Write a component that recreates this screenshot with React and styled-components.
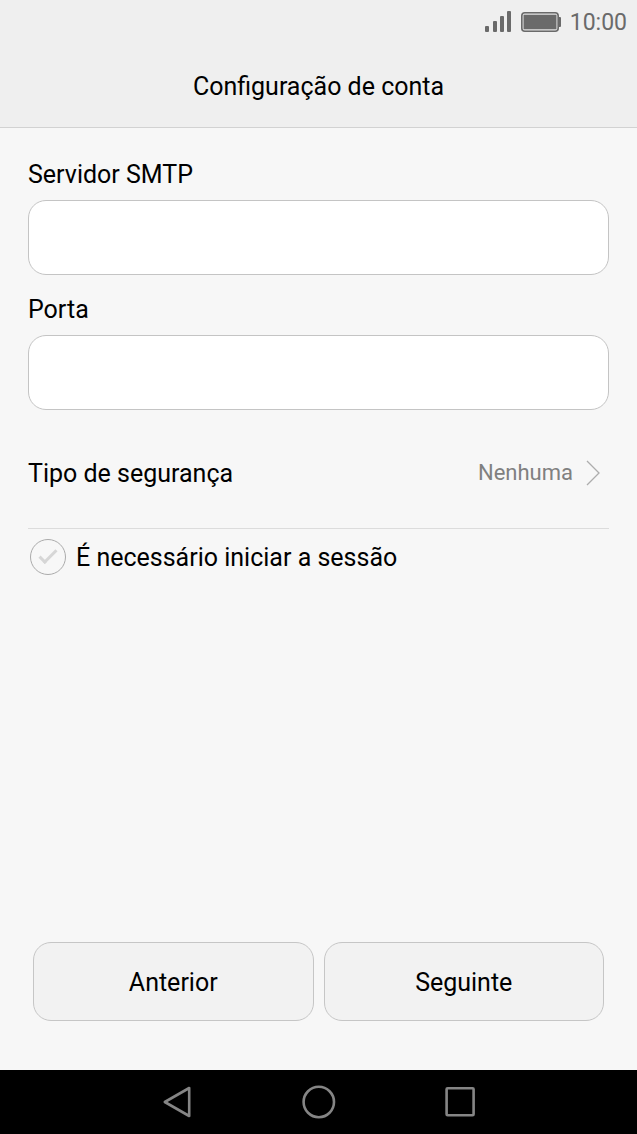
import { useState } from 'react';
import styled, { createGlobalStyle } from 'styled-components';

const GlobalStyle = createGlobalStyle`
    *, *::before, *::after {
        box-sizing: border-box;
    }

    body {
        margin: 0;
        background: #f7f7f7;
        color: #000;
        font-family: Roboto, 'Noto Sans', sans-serif;
        font-size: 25px;
        line-height: 34px;
    }

    button, input, select {
        font: inherit;
        color: inherit;
    }
`;

const Screen = styled.div`
    display: flex;
    flex-direction: column;
    min-height: 100vh;
`;

const Header = styled.header`
    background: #efefef;
    border-bottom: 1px solid #d2d2d2;
`;

const StatusBar = styled.div`
    display: flex;
    align-items: center;
    justify-content: flex-end;
    gap: 9px;
    height: 44px;
    padding-right: 10px;
    color: #6a6a6a;
    font-size: 23px;

    svg {
        display: block;
    }
`;

const Clock = styled.span`
    padding-top: 2px;
`;

const Title = styled.h1`
    margin: 0;
    padding: 26px 28px 23px;
    font-size: 25px;
    font-weight: 400;
    text-align: center;
`;

const Form = styled.form`
    flex: 1;
    display: flex;
    flex-direction: column;
    padding: 30px 28px 49px;
`;

const Field = styled.div`
    display: flex;
    flex-direction: column;
    gap: 8px;
    margin-bottom: 18px;
`;

const TextInput = styled.input`
    width: 100%;
    height: 75px;
    padding: 0 20px;
    background: #fff;
    border: 1px solid #c4c4c4;
    border-radius: 18px;
    outline: none;
`;

const SelectRow = styled.div`
    display: flex;
    align-items: center;
    justify-content: space-between;
    height: 101px;
    padding: 0 9px 10px 0;
    border-bottom: 1px solid #dcdcdc;

    label {
        padding-top: 2px;
    }
`;

const SelectValue = styled.div`
    display: flex;
    align-items: center;
    gap: 13px;
    color: #808080;
`;

const Select = styled.select`
    appearance: none;
    padding: 0;
    border: 0;
    background: transparent;
    font-size: 22px;
    text-align-last: right;
    outline: none;
`;

const CheckRow = styled.div`
    display: flex;
    align-items: center;
    gap: 10px;
    padding: 10px 2px;

    label {
        padding-top: 2px;
    }
`;

const Checkbox = styled.input`
    appearance: none;
    display: grid;
    place-items: center;
    width: 36px;
    height: 36px;
    margin: 0;
    border: 1px solid #ababab;
    border-radius: 50%;

    &::before {
        content: '';
        width: 18px;
        height: 9px;
        margin-bottom: 6px;
        border: solid #d6d6d6;
        border-width: 0 0 3px 3px;
        transform: rotate(-45deg);
    }

    &:checked::before {
        border-color: #1a9aa8;
    }
`;

const Actions = styled.div`
    display: grid;
    grid-template-columns: 1fr 1fr;
    gap: 10px;
    margin-top: auto;
    padding: 0 5px;
`;

const ActionButton = styled.button`
    height: 79px;
    padding: 2px 6px 0;
    background: #f2f2f2;
    border: 1px solid #c6c6c6;
    border-radius: 18px;
`;

const NavBar = styled.nav`
    display: flex;
    justify-content: center;
    gap: 106px;
    height: 64px;
    background: #000;
`;

const NavButton = styled.button`
    padding: 0;
    border: 0;
    background: none;

    svg {
        display: block;
        fill: none;
        stroke: #858585;
        stroke-width: 2.6;
        stroke-linejoin: round;
    }
`;

const SignalIcon = () => (
    <svg width="27" height="22" viewBox="0 0 27 22" fill="#6a6a6a" aria-hidden="true">
        <rect x="0" y="15" width="4" height="6" rx="1" />
        <rect x="8" y="10" width="4" height="11" rx="1" />
        <rect x="15" y="5" width="4" height="16" rx="1" />
        <rect x="22" y="0" width="4" height="21" rx="1" />
    </svg>
);

const BatteryIcon = () => (
    <svg width="40" height="20" viewBox="0 0 40 20" aria-hidden="true">
        <rect x="0.8" y="0.8" width="36.4" height="18.4" rx="3" fill="#dcdcdc" stroke="#6a6a6a" strokeWidth="1.6" />
        <rect x="2.6" y="2.8" width="32.8" height="14.4" fill="#6a6a6a" />
        <path d="M38 5h1q1 0 1 1v8q0 1-1 1h-1z" fill="#6a6a6a" />
    </svg>
);

const ChevronIcon = () => (
    <svg width="14" height="26" viewBox="0 0 14 26" fill="none" stroke="#adadad" strokeWidth="1.3" aria-hidden="true">
        <path d="M1 1l12 12L1 25" />
    </svg>
);

const navItems = [
    { label: 'Voltar', shape: <path d="M5.8 18L30.2 4v28z" /> },
    { label: 'Início', shape: <circle cx="17.8" cy="18" r="15.2" /> },
    { label: 'Recentes', shape: <rect x="3.6" y="4.2" width="27" height="27" rx="1" /> },
];

function App() {
    const [server, setServer] = useState('');
    const [port, setPort] = useState('');
    const [login, setLogin] = useState(false);

    return (
        <>
            <GlobalStyle />
            <Screen>
                <Header>
                    <StatusBar>
                        <SignalIcon />
                        <BatteryIcon />
                        <Clock>10:00</Clock>
                    </StatusBar>
                    <Title>Configuração de conta</Title>
                </Header>
                <Form onSubmit={e => e.preventDefault()}>
                    <Field>
                        <label htmlFor="server">Servidor SMTP</label>
                        <TextInput id="server" type="text" value={server} onChange={e => setServer(e.target.value)} />
                    </Field>
                    <Field>
                        <label htmlFor="port">Porta</label>
                        <TextInput id="port" type="text" inputMode="numeric" value={port} onChange={e => setPort(e.target.value)} />
                    </Field>
                    <SelectRow>
                        <label htmlFor="security">Tipo de segurança</label>
                        <SelectValue>
                            <Select id="security" defaultValue="none">
                                <option value="none">Nenhuma</option>
                            </Select>
                            <ChevronIcon />
                        </SelectValue>
                    </SelectRow>
                    <CheckRow>
                        <Checkbox id="login" type="checkbox" checked={login} onChange={e => setLogin(e.target.checked)} />
                        <label htmlFor="login">É necessário iniciar a sessão</label>
                    </CheckRow>
                    <Actions>
                        <ActionButton type="button">Anterior</ActionButton>
                        <ActionButton type="submit">Seguinte</ActionButton>
                    </Actions>
                </Form>
                <NavBar>
                    {navItems.map(item => (
                        <NavButton key={item.label} type="button" aria-label={item.label}>
                            <svg width="36" height="36" viewBox="0 0 36 36">{item.shape}</svg>
                        </NavButton>
                    ))}
                </NavBar>
            </Screen>
        </>
    );
}

export default App;
